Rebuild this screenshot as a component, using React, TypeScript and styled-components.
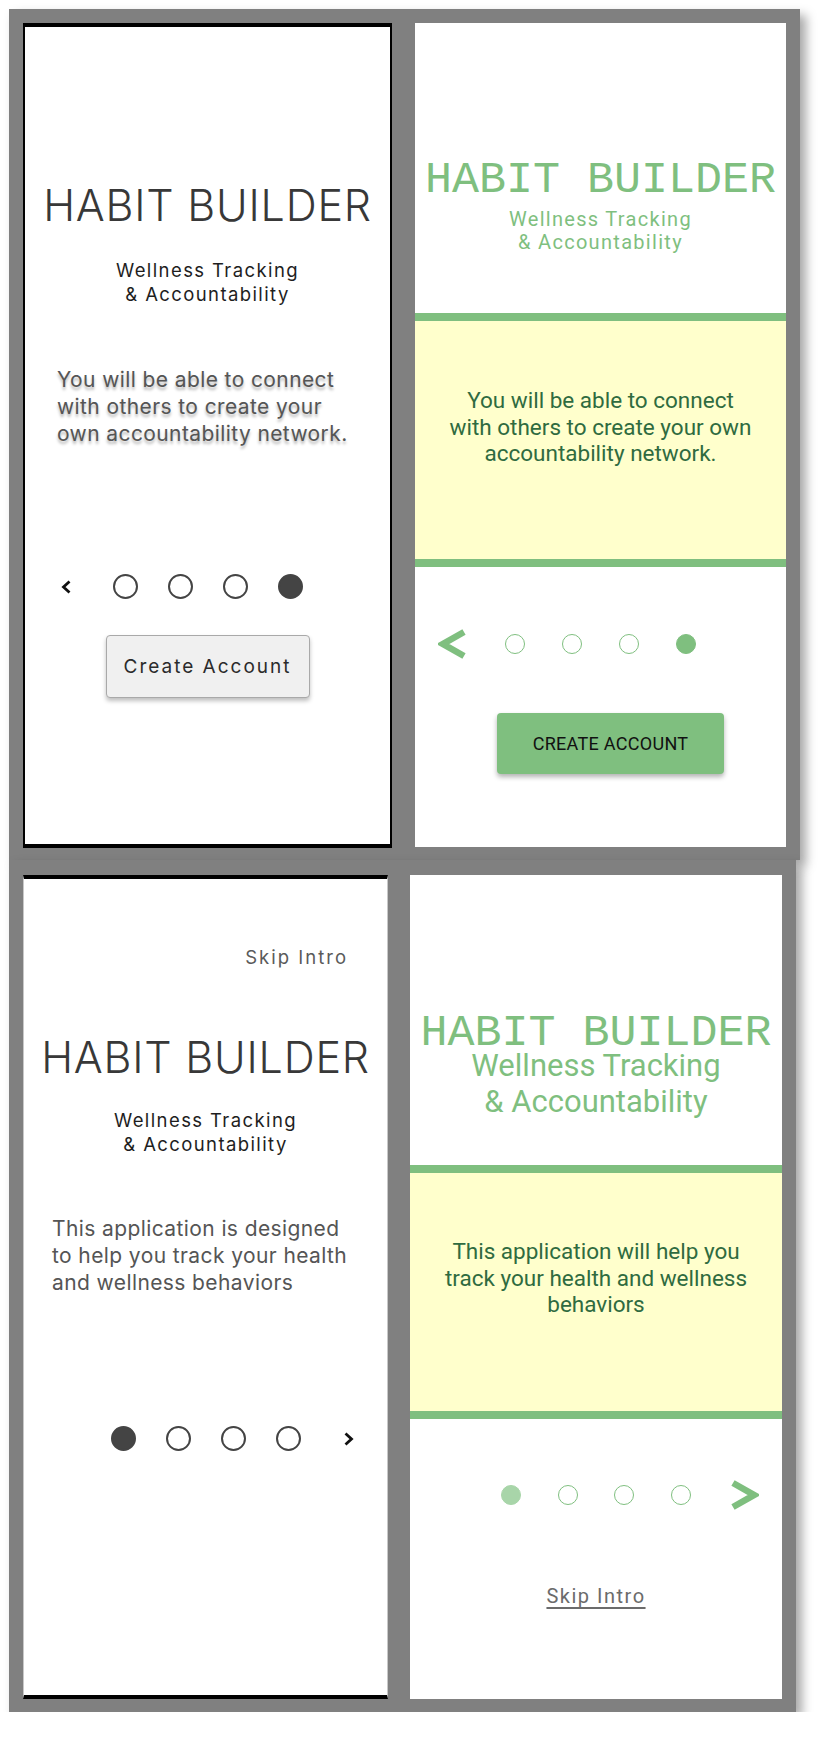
import React from 'react';
import styled, { createGlobalStyle } from 'styled-components';

const GREEN = '#7fbf7f';
const LIGHT_GREEN = '#a8d5a9';
const DARK_GREEN = '#2f6b40';
const YELLOW = '#ffffcc';

const GlobalStyle = createGlobalStyle`
  html, body {
    margin: 0;
    padding: 0;
    background: #ffffff;
  }
  body {
    font-family: Inter, "Liberation Sans", sans-serif;
  }
`;

type Variant = 'wire' | 'green';

const s = {
  Page: styled.div`
    padding: 9px 0 0 9px;
    display: flex;
    flex-direction: column;
    align-items: flex-start;
  `,
  Sheet: styled.section<{ $pad: string; $gap: number }>`
    display: flex;
    align-items: flex-start;
    gap: ${(p) => p.$gap}px;
    padding: ${(p) => p.$pad};
    background: #808080;
    box-shadow: 6px 6px 10px rgba(0, 0, 0, 0.35);
  `,
  // wireframe phone
  Phone: styled.div<{ $w: number; $h: number; $framed: boolean }>`
    width: ${(p) => p.$w}px;
    height: ${(p) => p.$h}px;
    box-sizing: border-box;
    background: #ffffff;
    border-top: 4px solid #000;
    border-bottom: 4px solid #000;
    border-left: ${(p) => (p.$framed ? '2px solid #000' : '1px solid #c8c8c8')};
    border-right: ${(p) => (p.$framed ? '2px solid #000' : '1px solid #c8c8c8')};
    display: flex;
    flex-direction: column;
    align-items: center;
    color: #333;
  `,
  WireSkip: styled.div<{ $mt: number; $mr: number }>`
    align-self: flex-end;
    margin: ${(p) => p.$mt}px ${(p) => p.$mr}px 0 0;
    font-size: 18.5px;
    line-height: 22px;
    letter-spacing: 2px;
    color: #5a5a5a;
  `,
  WireTitle: styled.h1<{ $mt: number }>`
    margin: ${(p) => p.$mt}px 0 0;
    font-size: 43px;
    font-weight: 300;
    line-height: 1;
    letter-spacing: 0.8px;
    color: #383838;
    white-space: nowrap;
  `,
  WireSub: styled.div<{ $mt: number }>`
    margin-top: ${(p) => p.$mt}px;
    font-size: 18.5px;
    line-height: 24px;
    letter-spacing: 1.4px;
    text-align: center;
    color: #1e1e1e;
  `,
  WireBody: styled.p<{ $mt: number; $pl: number; $shadow: boolean }>`
    align-self: stretch;
    margin: ${(p) => p.$mt}px 0 0;
    padding-left: ${(p) => p.$pl}px;
    font-size: 21px;
    line-height: 27px;
    letter-spacing: 0.4px;
    color: #555;
    white-space: nowrap;
    text-shadow: ${(p) => (p.$shadow ? '0 3px 3px rgba(0, 0, 0, 0.3)' : 'none')};
  `,
  WireButton: styled.button<{ $mt: number }>`
    margin-top: ${(p) => p.$mt}px;
    width: 204px;
    height: 63px;
    background: #f0f0f0;
    border: 1px solid #a9a9a9;
    border-radius: 4px;
    box-shadow: 0 3px 4px rgba(0, 0, 0, 0.25);
    font-family: Inter, "Liberation Sans", sans-serif;
    font-size: 19px;
    letter-spacing: 2px;
    color: #2b2b2b;
  `,
  // green themed panel
  Panel: styled.div<{ $w: number; $h: number }>`
    width: ${(p) => p.$w}px;
    height: ${(p) => p.$h}px;
    background: #ffffff;
    display: flex;
    flex-direction: column;
    align-items: center;
    font-family: Roboto, "Liberation Sans", sans-serif;
  `,
  Hero: styled.header<{ $pt: number }>`
    align-self: stretch;
    height: 290px;
    box-sizing: border-box;
    padding-top: ${(p) => p.$pt}px;
    display: flex;
    flex-direction: column;
    align-items: center;
  `,
  MonoTitle: styled.h1`
    margin: 0;
    font-family: "Liberation Mono", "DejaVu Sans Mono", monospace;
    font-size: 45px;
    font-weight: 400;
    line-height: 28px;
    color: ${GREEN};
    white-space: nowrap;
  `,
  GreenSub: styled.div<{ $big: boolean }>`
    margin-top: ${(p) => (p.$big ? 0 : 13)}px;
    font-size: ${(p) => (p.$big ? 31 : 20)}px;
    line-height: ${(p) => (p.$big ? 36 : 23)}px;
    letter-spacing: ${(p) => (p.$big ? 0 : 1.3)}px;
    text-align: center;
    color: ${GREEN};
  `,
  Callout: styled.div<{ $pt: number }>`
    align-self: stretch;
    height: 254px;
    box-sizing: border-box;
    padding-top: ${(p) => p.$pt}px;
    background: ${YELLOW};
    border-top: 8px solid ${GREEN};
    border-bottom: 8px solid ${GREEN};
    font-size: 22.5px;
    line-height: 26.5px;
    text-align: center;
    color: ${DARK_GREEN};
  `,
  GreenButton: styled.button<{ $mt: number }>`
    margin: ${(p) => p.$mt}px 0 0 20px;
    width: 227px;
    height: 61px;
    border: none;
    border-radius: 4px;
    background: ${GREEN};
    box-shadow: 0 3px 5px rgba(0, 0, 0, 0.3);
    font-family: Roboto, "Liberation Sans", sans-serif;
    font-size: 18px;
    letter-spacing: 0.3px;
    color: #111;
  `,
  SkipLink: styled.a<{ $mt: number }>`
    margin-top: ${(p) => p.$mt}px;
    font-size: 20px;
    line-height: 24px;
    letter-spacing: 1.5px;
    color: #6b6b6b;
    text-decoration: underline;
    text-underline-offset: 4px;
  `,
  // pager
  PagerRow: styled.div<{ $mt: number }>`
    align-self: stretch;
    margin-top: ${(p) => p.$mt}px;
    display: grid;
    grid-template-columns: 1fr auto 1fr;
    align-items: center;
  `,
  PagerSide: styled.div<{ $end: boolean; $gap: number }>`
    display: flex;
    justify-self: ${(p) => (p.$end ? 'end' : 'start')};
    margin: ${(p) => (p.$end ? `0 ${p.$gap}px 0 0` : `0 0 0 ${p.$gap}px`)};
  `,
  Dots: styled.div<{ $variant: Variant }>`
    display: flex;
    gap: ${(p) => (p.$variant === 'wire' ? 30 : 36.7)}px;
  `,
  Dot: styled.span<{ $variant: Variant; $state: 'on' | 'off' | 'faint' }>`
    box-sizing: border-box;
    width: ${(p) => (p.$variant === 'wire' ? 25 : 20)}px;
    height: ${(p) => (p.$variant === 'wire' ? 25 : 20)}px;
    border-radius: 50%;
    border: ${(p) => (p.$variant === 'wire' ? '2.5px' : '1.8px')} solid
      ${(p) => (p.$variant === 'wire' ? '#444' : p.$state === 'faint' ? LIGHT_GREEN : GREEN)};
    background: ${(p) =>
      p.$state === 'off'
        ? 'transparent'
        : p.$variant === 'wire'
        ? '#444'
        : p.$state === 'faint'
        ? LIGHT_GREEN
        : GREEN};
  `,
};

const Chevron = ({ variant, dir }: { variant: Variant; dir: 'prev' | 'next' }) => {
  const flip = dir === 'next' ? 'scale(-1,1)' : undefined;
  if (variant === 'wire') {
    return (
      <svg width="12" height="16" viewBox="0 0 12 16" style={{ transform: flip }}>
        <polyline points="9.5,2.5 3.5,8 9.5,13.5" fill="none" stroke="#111" strokeWidth="2.8" />
      </svg>
    );
  }
  return (
    <svg width="28" height="30" viewBox="0 0 28 30" style={{ transform: flip }}>
      <polyline
        points="26,3 5,15 26,27"
        fill="none"
        stroke={GREEN}
        strokeWidth="6.5"
        strokeLinejoin="miter"
        strokeLinecap="butt"
      />
    </svg>
  );
};

interface PagerProps {
  variant: Variant;
  dir: 'prev' | 'next';
  active: number;
  mt: number;
  gap: number;
}

const Pager = ({ variant, dir, active, mt, gap }: PagerProps) => (
  <s.PagerRow $mt={mt}>
    <s.PagerSide $end={true} $gap={gap}>
      {dir === 'prev' && <Chevron variant={variant} dir="prev" />}
    </s.PagerSide>
    <s.Dots $variant={variant}>
      {[0, 1, 2, 3].map((i) => (
        <s.Dot
          key={i}
          $variant={variant}
          $state={i === active ? (variant === 'green' && i === 0 ? 'faint' : 'on') : 'off'}
        />
      ))}
    </s.Dots>
    <s.PagerSide $end={false} $gap={gap}>
      {dir === 'next' && <Chevron variant={variant} dir="next" />}
    </s.PagerSide>
  </s.PagerRow>
);

const App = (): JSX.Element => {
  return (
    <>
      <GlobalStyle />
      <s.Page>
        <s.Sheet $pad="14px 14px 12px 14px" $gap={23}>
          <s.Phone $w={369} $h={825} $framed={true}>
            <s.WireTitle $mt={157}>HABIT BUILDER</s.WireTitle>
            <s.WireSub $mt={31}>
              Wellness Tracking
              <br />
              &amp; Accountability
            </s.WireSub>
            <s.WireBody $mt={60} $pl={32} $shadow={true}>
              You will be able to connect
              <br />
              with others to create your
              <br />
              own accountability network.
            </s.WireBody>
            <Pager variant="wire" dir="prev" active={3} mt={127} gap={41} />
            <s.WireButton $mt={36}>Create Account</s.WireButton>
          </s.Phone>

          <s.Panel $w={371} $h={824}>
            <s.Hero $pt={144}>
              <s.MonoTitle>HABIT BUILDER</s.MonoTitle>
              <s.GreenSub $big={false}>
                Wellness Tracking
                <br />
                &amp; Accountability
              </s.GreenSub>
            </s.Hero>
            <s.Callout $pt={66}>
              You will be able to connect
              <br />
              with others to create your own
              <br />
              accountability network.
            </s.Callout>
            <Pager variant="green" dir="prev" active={3} mt={62} gap={39} />
            <s.GreenButton $mt={54}>CREATE ACCOUNT</s.GreenButton>
          </s.Panel>
        </s.Sheet>

        <s.Sheet $pad="15px 14px 13px 14px" $gap={22}>
          <s.Phone $w={365} $h={824} $framed={false}>
            <s.WireSkip $mt={67} $mr={39}>Skip Intro</s.WireSkip>
            <s.WireTitle $mt={68}>HABIT BUILDER</s.WireTitle>
            <s.WireSub $mt={29}>
              Wellness Tracking
              <br />
              &amp; Accountability
            </s.WireSub>
            <s.WireBody $mt={59} $pl={28} $shadow={false}>
              This application is designed
              <br />
              to help you track your health
              <br />
              and wellness behaviors
            </s.WireBody>
            <Pager variant="wire" dir="next" active={0} mt={130} gap={42} />
          </s.Phone>

          <s.Panel $w={372} $h={824}>
            <s.Hero $pt={145}>
              <s.MonoTitle>HABIT BUILDER</s.MonoTitle>
              <s.GreenSub $big={true}>
                Wellness Tracking
                <br />
                &amp; Accountability
              </s.GreenSub>
            </s.Hero>
            <s.Callout $pt={65}>
              This application will help you
              <br />
              track your health and wellness
              <br />
              behaviors
            </s.Callout>
            <Pager variant="green" dir="next" active={0} mt={61} gap={40} />
            <s.SkipLink $mt={74}>Skip Intro</s.SkipLink>
          </s.Panel>
        </s.Sheet>
      </s.Page>
    </>
  );
};

export default App;
